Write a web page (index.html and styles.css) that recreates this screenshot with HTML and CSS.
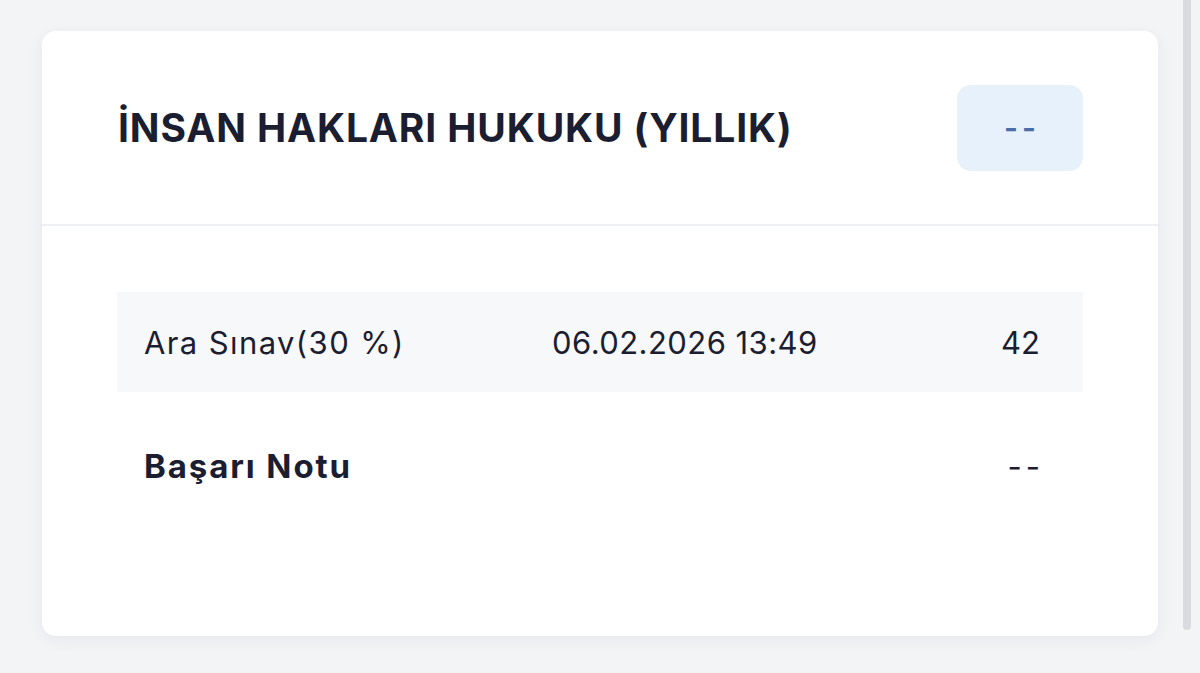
FILE: index.html
```html
<!DOCTYPE html>
<html lang="tr">
<head>
<meta charset="utf-8">
<title>Not</title>
<link rel="stylesheet" href="styles.css">
</head>
<body>
<div class="page">
  <div class="card">
    <div class="card-header">
      <h1 class="title">İNSAN HAKLARI HUKUKU (YILLIK)</h1>
      <div class="badge">--</div>
    </div>
    <div class="card-body">
      <div class="row row-exam">
        <span class="cell name">Ara Sınav(30 %)</span>
        <span class="cell date">06.02.2026 13:49</span>
        <span class="cell score">42</span>
      </div>
      <div class="row row-total">
        <span class="cell name total-label">Başarı Notu</span>
        <span class="cell date"></span>
        <span class="cell score dashes">--</span>
      </div>
    </div>
  </div>
  <div class="side-strip"></div>
</div>
</body>
</html>
```
FILE: styles.css
```css
html, body {
  margin: 0;
  padding: 0;
  background: #f3f4f6;
  font-family: "Inter", "Noto Sans", sans-serif;
  color: #1b1d31;
}
.page {
  display: flex;
  align-items: flex-start;
  padding: 31px 0 0 42px;
  height: 673px;
  box-sizing: border-box;
}
.card {
  width: 1116px;
  height: 605px;
  background: #ffffff;
  border-radius: 14px;
  box-shadow: 0 4px 16px rgba(30, 40, 70, 0.06);
  display: flex;
  flex-direction: column;
  flex-shrink: 0;
}
.card-header {
  height: 195px;
  box-sizing: border-box;
  border-bottom: 2px solid #eef0f3;
  display: flex;
  align-items: center;
  justify-content: space-between;
  padding: 0 75px 0 76px;
}
.title {
  margin: 0;
  font-size: 39px;
  font-weight: 700;
  letter-spacing: 0.88px;
  color: #1b1d31;
}
.badge {
  width: 126px;
  height: 86px;
  border-radius: 14px;
  background: #e6f1fc;
  color: #4a6ea8;
  font-size: 30px;
  font-weight: 600;
  display: flex;
  align-items: center;
  justify-content: center;
  letter-spacing: 4px;
  text-indent: 4px;
}
.card-body {
  padding: 66px 75px 0 75px;
}
.row {
  display: grid;
  grid-template-columns: 408px 1fr auto;
  align-items: center;
  padding: 0 43px 0 27px;
  font-size: 31px;
}
.row-exam {
  height: 100px;
  background: #f7f8fa;
}
.name {
  letter-spacing: 1.4px;
}
.date {
  letter-spacing: 0.45px;
}
.row-total {
  height: 148px;
}
.total-label {
  font-weight: 700;
  font-size: 33px;
  letter-spacing: 1.9px;
}
.score {
  text-align: right;
}
.dashes {
  letter-spacing: 4px;
  margin-right: -4px;
}
.side-strip {
  width: 8px;
  height: 630px;
  margin-top: -31px;
  margin-left: 25px;
  background: #dadbde;
  border-radius: 0 0 4px 4px;
}
```
